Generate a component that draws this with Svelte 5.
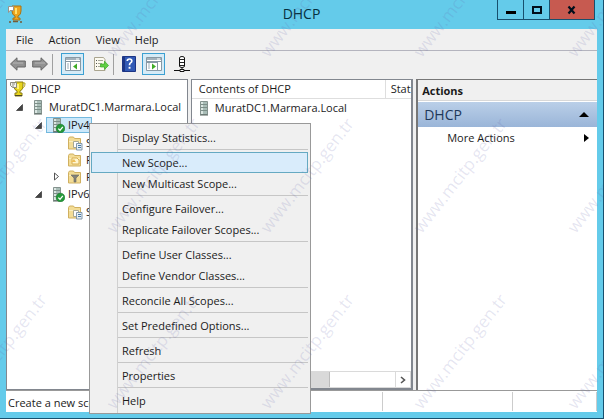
<script>
  const menus = ['File', 'Action', 'View', 'Help'];
  const tree = [
    { label: 'MuratDC1.Marmara.Local', level: 1, icon: 'server', open: true, tall: true },
    { label: 'IPv4', level: 2, icon: 'ok', open: true, tall: true, selected: true },
    { label: 'Server Options', level: 3, icon: 'options' },
    { label: 'Policies', level: 3, icon: 'policy' },
    { label: 'Filters', level: 3, icon: 'filter', open: false },
    { label: 'IPv6', level: 2, icon: 'ok', open: true, tall: true },
    { label: 'Server Options', level: 3, icon: 'options' },
  ];
  const groups = [
    ['Display Statistics...'],
    ['New Scope...', 'New Multicast Scope...'],
    ['Configure Failover...', 'Replicate Failover Scopes...'],
    ['Define User Classes...', 'Define Vendor Classes...'],
    ['Reconcile All Scopes...'],
    ['Set Predefined Options...'],
    ['Refresh'],
    ['Properties'],
    ['Help'],
  ];
  let active = $state('New Scope...');
  const marks = [];
  for (const top of [60, 236, 412]) {
    for (const left of [-36, 117, 271, 424, 578]) marks.push({ left, top });
  }
</script>

{#snippet trophy()}
  <svg width="16" height="16" viewBox="0 0 16 16" aria-hidden="true">
    <path d="M5 1h8v4q0 4-3 5v2h2v3H5v-3h2v-2Q4 9 4 5z" fill="#e8d51c" stroke="#8a7c14" />
    <path d="M13 2h2q0 5-3 5M8 3v5" fill="none" stroke="#b8a40c" />
    <path d="M7 3h2v5H7z" fill="#fff27a" />
    <path d="M.5 1.500h6v5h-4l-2-2z" fill="#f5f5f0" stroke="#8b8b7c" />
    <path d="M2 3h3M2 5h2" stroke="#8b8b7c" />
    <path d="M5 14.500h7" stroke="#4a4526" />
  </svg>
{/snippet}

{#snippet icon(kind)}
  <svg width="16" height="16" viewBox="0 0 16 16" aria-hidden="true">
    {#if kind === 'server' || kind === 'ok'}
      <path d="M4.500 1.500h7v13h-7z" fill="#a9bdb7" stroke="#84928e" />
      <path d="M5 2h2v12H5z" fill="#dbe6e2" />
      <path d="M5 4.500h6M5 7.500h6M5 10.500h6" stroke="#7d8f89" />
      <path d="M4 15h8" stroke="#56645f" />
      {#if kind === 'ok'}
        <circle cx="11.500" cy="11.500" r="4.300" fill="#24993a" stroke="#16752a" stroke-width=".6" />
        <path d="M9.300 11.600l1.700 1.700 2.800-3.500" fill="none" stroke="#fff" stroke-width="1.300" />
      {/if}
    {:else}
      <path d="M1.500 3.500l1-1.500h4l1 1.500h6v10.500h-12z" fill="#f3dc95" stroke="#d0b060" />
      <path d="M2 6h11v1H2z" fill="#fbefbf" />
      {#if kind === 'options'}
        <path d="M6.500 6.500h5v6h-5z" fill="#fff" stroke="#a9a892" />
        <path d="M9.500 8.500h5.500v6.500H9.500z" fill="#e6eef5" stroke="#8499aa" />
        <path d="M11 10.500h3M11 12.500h3" stroke="#477aa5" />
      {:else if kind === 'policy'}
        <path d="M5 6h5l2 2v4H5z" fill="#fff6cf" stroke="#d8ae50" />
        <path d="M4 10l3-3 2 3z" fill="#edbd57" />
      {:else}
        <path d="M4 6h8L9 9v4H7V9z" fill="#83827a" stroke="#696860" stroke-width=".6" />
      {/if}
    {/if}
  </svg>
{/snippet}

{#snippet arrow(flip)}
  <svg width="16" height="14" viewBox="0 0 16 14" aria-hidden="true">
    <path
      d={flip ? 'M15.500 7L9 .8V4H.7v6H9v3.200z' : 'M.5 7L7 .8V4h8.300v6H7v3.200z'}
      fill="#929292"
      stroke="#666"
    />
    <path d="M3 6h10" stroke="#b5b5b5" />
  </svg>
{/snippet}

{#snippet panel(right)}
  <svg width="16" height="14" viewBox="0 0 16 14" aria-hidden="true">
    <path d="M.5.5h15v13H.5z" fill="#fff" stroke="#8799a5" />
    <path d="M1 1h14v2H1z" fill="#a3b1bb" />
    <path d="M11 2h3" stroke="#fff" />
    <path d="M1 4.500h14" stroke="#8799a5" />
    {#if right}
      <path d="M11.500 5v8M1 5.500h10" stroke="#8799a5" />
      <path d="M2 7h2M2 9h2M2 11h2" stroke="#9bacb6" />
      <path d="M6 6.500l4 3-4 3z" fill="#3fac28" />
    {:else}
      <path d="M5.500 5v8" stroke="#8799a5" />
      <path d="M2 7h2M2 9h2M2 11h2" stroke="#9bacb6" />
      <path d="M12 6.500l-4 3 4 3z" fill="#3fac28" />
    {/if}
  </svg>
{/snippet}

<div class="window">
  <header class="title">
    <span class="app-icon">
      <svg width="16" height="18" viewBox="0 0 16 18" aria-hidden="true">
        <path d="M4 1h9v5q0 4-3 5v2h2v2H5v-2h2v-2Q4 10 4 6z" fill="#eda51d" stroke="#a97316" />
        <path d="M7 3h2v6H7z" fill="#ffe06c" />
        <path d="M.5 1.500h5v4H2l-1.500 2z" fill="#fff" stroke="#99958a" />
        <path d="M1 17h2M5 16.500h5M12 17h2" stroke="#735b37" stroke-width="1.500" />
      </svg>
    </span>
    <h1>DHCP</h1>
    <div class="controls">
      <button aria-label="Minimize"><svg width="12" height="10" viewBox="0 0 12 10"><path d="M1 6h10v3H1z" /></svg></button>
      <button aria-label="Maximize"><svg width="12" height="10" viewBox="0 0 12 10"><path d="M2 2h8v6H2z" fill="none" stroke="#000e1b" stroke-width="2" /></svg></button>
      <button class="close" aria-label="Close"><svg width="12" height="10" viewBox="0 0 12 10"><path d="M2.500 1.500l6 7M8.500 1.500l-6 7" stroke="#000e1b" stroke-width="2.200" /></svg></button>
    </div>
  </header>

  <div class="client">
    <nav class="menubar">
      {#each menus as m}<button>{m}</button>{/each}
    </nav>
    <div class="toolbar">
      <button aria-label="Back">{@render arrow(false)}</button>
      <button aria-label="Forward">{@render arrow(true)}</button>
      <span class="divider"></span>
      <button class="framed" aria-label="Show or hide console tree">{@render panel(false)}</button>
      <button class="export" aria-label="Export list">
        <svg width="16" height="16" viewBox="0 0 16 16">
          <path d="M1.500 1.500h9l1.500 2v11H1.500z" fill="#fcfaf0" stroke="#aaa58f" />
          <path d="M3 4.500h1M3 7.500h1M3 10.500h1" stroke="#555" />
          <path d="M5 4.500h5M5 7.500h4M5 10.500h4" stroke="#a6a899" />
          <path d="M7.500 8h4V5.200L15.500 9.500l-4 4V11h-4z" fill="#61cf45" stroke="#39a724" stroke-width=".7" />
        </svg>
      </button>
      <span class="divider"></span>
      <button aria-label="Help">
        <svg width="14" height="16" viewBox="0 0 14 16">
          <path d="M.5.5h13v15H.5z" fill="#3159b5" stroke="#1c3585" />
          <path d="M1 1h2v14H1z" fill="#1c3585" />
          <path d="M5.300 5q0-2 2.200-2t2.300 1.900q0 1.200-1.300 2-1 .7-1 2.300" fill="none" stroke="#fff" stroke-width="1.700" />
          <path d="M6.600 10.800h1.900v1.900H6.600z" fill="#fff" />
        </svg>
      </button>
      <button class="framed" aria-label="Show or hide action pane">{@render panel(true)}</button>
      <button class="network" aria-label="Statistics">
        <svg width="16" height="16" viewBox="0 0 16 16">
          <path d="M5.500 2q0-1.500 2.500-1.500t2.500 1.500v8q0 1.500-2.500 1.500t-2.500-1.500z" fill="#fff" stroke="#111" />
          <path d="M6 3.500h4M6 6.500h4M6 9.500h4" stroke="#222" />
          <path d="M8 11.500v2M0 14.500h6M10 14.500h6" stroke="#111" />
          <path d="M6 13.500h4v2H6z" fill="#fff" stroke="#111" />
        </svg>
      </button>
    </div>

    <main>
      <section class="tree" aria-label="Console tree">
        <ul>
          <li class="root">{@render trophy()}<span>DHCP</span></li>
          {#each tree as n}
            <li class="level{n.level}" class:tall={n.tall}>
              <span class="twist">
                {#if n.open}
                  <svg width="7" height="7" viewBox="0 0 7 7"><path d="M6.500.5v6h-6z" fill="#444" stroke="#222" stroke-width=".6" /></svg>
                {:else if n.open === false}
                  <svg width="7" height="9" viewBox="0 0 7 9"><path d="M1.500 1l4 3.500-4 3.500z" fill="#fff" stroke="#555" /></svg>
                {/if}
              </span>
              <span class="node" class:selected={n.selected}>{@render icon(n.icon)}<span>{n.label}</span></span>
            </li>
          {/each}
        </ul>
      </section>

      <section class="contents">
        <table>
          <thead><tr><th>Contents of DHCP</th><th class="status-col">Status</th></tr></thead>
          <tbody><tr><td><span class="cell">{@render icon('server')}MuratDC1.Marmara.Local</span></td><td></td></tr></tbody>
        </table>
        <div class="scroll">
          <span class="thumb"></span>
          <button aria-label="Scroll right"><svg width="6" height="8" viewBox="0 0 6 8"><path d="M1 1l3.500 3L1 7" fill="none" stroke="#555" stroke-width="1.600" /></svg></button>
        </div>
      </section>

      <aside>
        <h2>Actions</h2>
        <button class="group">DHCP<svg width="10" height="5" viewBox="0 0 10 5"><path d="M5 0l5 5H0z" /></svg></button>
        <button class="more">More Actions<svg width="5" height="8" viewBox="0 0 5 8"><path d="M0 0l5 4-5 4z" /></svg></button>
      </aside>
    </main>

    <footer><span class="message">Create a new scope</span><span class="mid"></span><span class="last"></span></footer>
  </div>

  <div class="context" role="menu">
    {#each groups as g}
      <div class="items" role="group">
        {#each g as item}
          <button role="menuitem" class:active={active === item} onmouseenter={() => (active = item)}>{item}</button>
        {/each}
      </div>
    {/each}
  </div>

  <div class="watermarks" aria-hidden="true">
    {#each marks as m}
      <span style="left: {m.left}px; top: {m.top}px">www.mcitp.gen.tr</span>
    {/each}
  </div>
</div>

<style>
  .window {
    position: relative;
    box-sizing: border-box;
    min-height: 100vh;
    display: flex;
    flex-direction: column;
    padding: 0 6px 6px;
    overflow: hidden;
    background: #64cbea;
    border-right: 1px solid #17506e;
    border-bottom: 1px solid #17506e;
    font: 11px/16px "Open Sans", "Noto Sans", sans-serif;
    color: #1b1b1b;
  }
  button {
    padding: 0;
    border: 0;
    background: none;
    font: inherit;
    color: inherit;
  }
  svg { display: block; flex: none; }
  ul { margin: 0; padding: 0; list-style: none; }

  .title { display: grid; grid-template-columns: 1fr auto 1fr; height: 29px; }
  .app-icon { padding: 5px 0 0 2px; }
  h1 { margin: 0; font-size: 14px; line-height: 28px; font-weight: 400; color: #06303e; }
  .controls { display: flex; justify-self: end; height: 20px; box-sizing: border-box; border: 1px solid #17506e; border-top: 0; margin-right: 2px; }
  .controls button { display: flex; align-items: center; justify-content: center; width: 26px; border-right: 1px solid #17506e; }
  .controls .close { width: 44px; border: 0; background: #c75a50; }

  .client { flex: 1; display: flex; flex-direction: column; background: #f0f0f0; }
  .menubar { display: flex; gap: 15px; height: 21px; padding-left: 10px; border-bottom: 1px solid #b4b4be; }
  .toolbar { display: flex; align-items: center; gap: 6px; height: 28px; padding: 0 4px 2px; box-sizing: border-box; }
  .divider { width: 1px; height: 21px; margin-left: -2px; background: #a0a0a0; }
  .framed { display: flex; align-items: center; justify-content: center; width: 23px; height: 22px; box-sizing: border-box; border: 1px solid #3ca0d2; background: #d5ebf7; }
  .export { margin-left: 3px; }
  .divider + button { margin-left: 2px; }
  .network { margin-left: 3px; }

  main { flex: 1; display: flex; gap: 3px; }
  section { box-sizing: border-box; background: #fff; border: 1px solid #82878f; }
  .tree { flex: 182 0 0; min-width: 0; overflow: hidden; }
  li { display: flex; align-items: center; height: 17px; white-space: nowrap; }
  .tall { height: 18px; }
  .root { gap: 5px; height: 18px; padding-left: 3px; }
  .twist { width: 7px; margin-right: 4px; }
  .level1 { padding-left: 9px; }
  .level2 { padding-left: 28px; }
  .level3 { padding-left: 46px; }
  .node { display: flex; align-items: center; gap: 3px; padding: 0 2px; border: 1px solid transparent; height: 14px; }
  .selected { background: #cce8fa; border-color: #73b9de; }

  .contents { flex: 222 0 0; min-width: 0; display: flex; flex-direction: column; overflow: hidden; border-right-width: 2px; border-bottom-width: 2px; }
  table { width: 100%; table-layout: fixed; border-collapse: collapse; }
  th { height: 18px; padding: 1px 0 0 7px; box-sizing: border-box; text-align: left; font-weight: 400; border-bottom: 1px solid #dedede; }
  .status-col { width: 26px; padding-left: 5px; box-sizing: border-box; border-left: 1px solid #dedede; overflow: hidden; }
  td { height: 18px; padding: 0 0 0 4px; }
  .cell { display: flex; align-items: center; gap: 3px; white-space: nowrap; }
  .scroll { display: flex; justify-content: flex-end; height: 15px; margin-top: auto; border: 1px solid #dadada; }
  .scroll .thumb { flex: 1; margin-right: 65px; background: #d9d9d9; border-right: 1px solid #bcbcbc; }
  .scroll button { display: flex; align-items: center; justify-content: center; width: 15px; border-left: 1px solid #dadada; }

  aside { flex: 181 0 0; min-width: 0; display: flex; flex-direction: column; background: #fff; border-left: 2px solid #777; border-top: 1px solid #777; }
  h2 { margin: 0; padding: 3px 4px 0; height: 17px; font-size: 11px; line-height: 16px; background: #f0f0f0; border-bottom: 1px solid #d8d8d8; }
  .group { display: flex; align-items: center; justify-content: space-between; height: 25px; margin-top: 1px; padding: 0 8px 0 6px; background: linear-gradient(#bacfe8, #9ab5d8); font-size: 14px; color: #1e3859; }
  .group svg { fill: #000; }
  .more { display: flex; align-items: center; justify-content: space-between; height: 21px; padding: 0 8px 0 29px; }

  footer { display: flex; height: 21px; background: #fff; border-top: 1px solid #999; align-items: center; overflow: hidden; }
  .message { flex: 375 0 0; padding-left: 2px; margin-top: 3px; }
  .mid { flex: 129 0 0; height: 19px; border-left: 1px solid #ccc; }
  .last { flex: 83 0 0; height: 19px; border-left: 1px solid #ccc; border-right: 1px solid #ccc; }

  .context { position: absolute; left: 89px; top: 123px; box-sizing: border-box; width: 222px; padding: 3px 2px 2px 1px; background: linear-gradient(90deg, #f0f0f0 27px, #d0d0d0 27px, #d0d0d0 28px, #f0f0f0 28px); border: 1px solid #999; }
  .items { display: flex; flex-direction: column; }
  .items + .items { margin-top: 1px; }
  .items + .items::before { content: ""; height: 1px; margin: 0 0 2px 27px; background: #c6c6c6; }
  .items button { height: 21px; padding: 0 0 0 30px; text-align: left; border: 1px solid transparent; }
  .items .active { background: #d9ecfb; border-color: #65a9c2; }

  .watermarks { position: absolute; inset: 0; overflow: hidden; pointer-events: none; }
  .watermarks span { position: absolute; transform-origin: 0 100%; transform: translateY(-100%) rotate(-52deg); font-size: 17px; line-height: 18px; white-space: nowrap; color: rgba(100, 100, 170, 0.17); }
</style>
